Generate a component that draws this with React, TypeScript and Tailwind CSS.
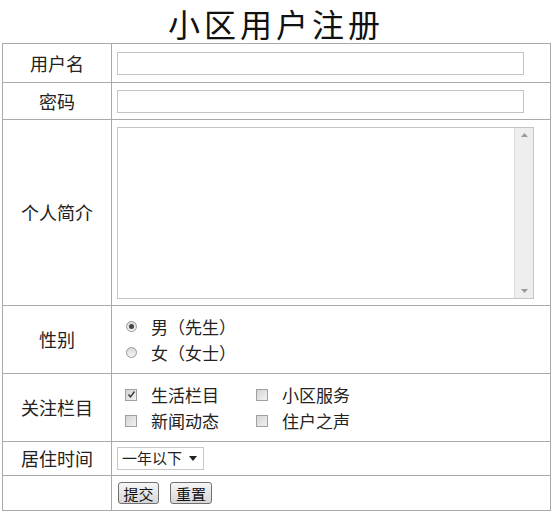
import { useState } from "react"

const font = { fontFamily: '"Noto Sans CJK SC", "Noto Sans", sans-serif' }

function Radio({ checked, label }: { checked: boolean; label: string }) {
  return (
    <label className="flex h-[26px] items-center">
      <span className="ml-[2px] flex h-[11px] w-[11px] items-center justify-center rounded-full border border-[#9a9a9a] bg-gradient-to-b from-[#d8d8d8] to-[#f4f4f4]">
        {checked ? <span className="h-[5px] w-[5px] rounded-full bg-[#444]" /> : null}
      </span>
      <span className="ml-[14px] text-[17px] text-[#222]">{label}</span>
    </label>
  )
}

function Check({ checked, label }: { checked: boolean; label: string }) {
  return (
    <label className="flex h-[26px] items-center">
      <span className="ml-[1px] flex h-[12px] w-[12px] items-center justify-center border border-[#a0a0a0] bg-gradient-to-br from-[#d4d4d4] to-[#f2f2f2]">
        {checked ? (
          <svg width="9" height="9" viewBox="0 0 9 9">
            <path d="M1.5 4.5 L3.5 7 L7.5 1.5" fill="none" stroke="#333" strokeWidth="1.3" />
          </svg>
        ) : null}
      </span>
      <span className="ml-[14px] text-[17px] text-[#222]">{label}</span>
    </label>
  )
}

export default function App() {
  const [gender] = useState("male")

  return (
    <div className="h-[512px] w-[552px] bg-white" style={font}>
      <h1 className="h-[43px] text-center text-[32px] font-normal leading-[46px] tracking-[4px] text-[#111]">
        小区用户注册
      </h1>
      <table className="ml-[2px] w-[549px] border-collapse border border-[#9c9c9c] text-[18px] text-[#222]">
        <tbody>
          <tr className="h-[39px]">
            <td className="w-[109px] border border-[#a9a9a9] text-center">用户名</td>
            <td className="border border-[#a9a9a9] pl-[5px]">
              <input className="block h-[23px] w-[407px] border border-[#c4c4c4] bg-white outline-none" />
            </td>
          </tr>
          <tr className="h-[37px]">
            <td className="border border-[#a9a9a9] text-center">密码</td>
            <td className="border border-[#a9a9a9] pl-[5px]">
              <input type="password" className="block h-[23px] w-[407px] border border-[#c4c4c4] bg-white outline-none" />
            </td>
          </tr>
          <tr className="h-[186px]">
            <td className="border border-[#a9a9a9] text-center">个人简介</td>
            <td className="border border-[#a9a9a9] pl-[5px]">
              <div className="flex h-[172px] w-[417px] border border-[#c4c4c4] bg-white">
                <textarea className="h-full flex-1 resize-none outline-none" />
                <div className="flex w-[19px] flex-col items-center justify-between border-l border-[#dcdcdc] bg-[#eeeeee] py-[5px]">
                  <svg width="7" height="4" viewBox="0 0 7 4">
                    <path d="M0 4 L3.5 0 L7 4 Z" fill="#9a9a9a" />
                  </svg>
                  <svg width="7" height="4" viewBox="0 0 7 4">
                    <path d="M0 0 L3.5 4 L7 0 Z" fill="#9a9a9a" />
                  </svg>
                </div>
              </div>
            </td>
          </tr>
          <tr className="h-[68px]">
            <td className="border border-[#a9a9a9] text-center">性别</td>
            <td className="border border-[#a9a9a9] pl-[12px]">
              <Radio checked={gender === "male"} label="男（先生）" />
              <Radio checked={gender === "female"} label="女（女士）" />
            </td>
          </tr>
          <tr className="h-[68px]">
            <td className="border border-[#a9a9a9] text-center">关注栏目</td>
            <td className="border border-[#a9a9a9] pl-[12px]">
              <div className="grid grid-cols-[131px_auto]">
                <Check checked label="生活栏目" />
                <Check checked={false} label="小区服务" />
                <Check checked={false} label="新闻动态" />
                <Check checked={false} label="住户之声" />
              </div>
            </td>
          </tr>
          <tr className="h-[34px]">
            <td className="border border-[#a9a9a9] text-center">居住时间</td>
            <td className="border border-[#a9a9a9] pl-[5px]">
              <div className="flex h-[23px] w-[87px] items-center justify-between border border-[#c8c8c8] bg-white pl-[4px] pr-[6px] text-[15px]">
                <span>一年以下</span>
                <svg width="8" height="5" viewBox="0 0 8 5">
                  <path d="M0 0 L4 5 L8 0 Z" fill="#222" />
                </svg>
              </div>
            </td>
          </tr>
          <tr className="h-[35px]">
            <td className="border border-[#a9a9a9]"></td>
            <td className="border border-[#a9a9a9] pl-[6px]">
              <div className="flex gap-[11px]">
                <button className="h-[22px] w-[41px] rounded-[3px] border border-[#707070] bg-gradient-to-b from-[#f6f6f6] to-[#d6d6d6] text-[15px] leading-none text-[#111]">
                  提交
                </button>
                <button className="h-[22px] w-[42px] rounded-[3px] border border-[#707070] bg-gradient-to-b from-[#f6f6f6] to-[#d6d6d6] text-[15px] leading-none text-[#111]">
                  重置
                </button>
              </div>
            </td>
          </tr>
        </tbody>
      </table>
    </div>
  )
}
